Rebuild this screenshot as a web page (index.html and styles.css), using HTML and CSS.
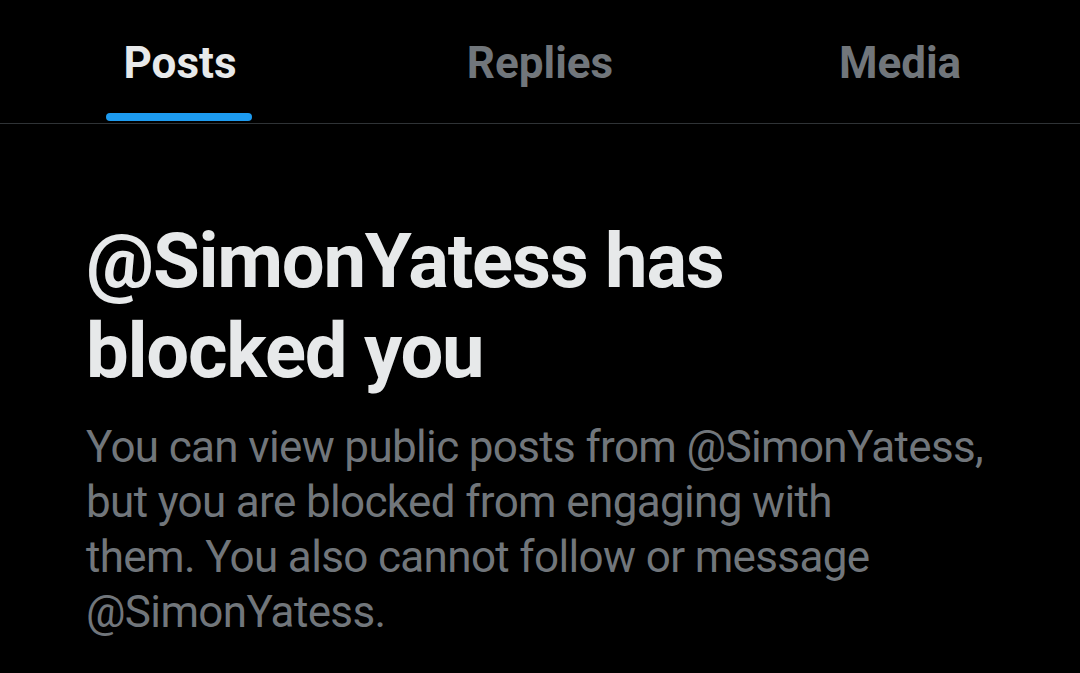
FILE: index.html
```html
<!DOCTYPE html>
<html lang="en">
<head>
<meta charset="utf-8">
<link rel="stylesheet" href="styles.css">
</head>
<body>
<nav class="tabs">
  <div class="tab tab-active"><span class="tab-label">Posts</span><span class="indicator"></span></div>
  <div class="tab"><span class="tab-label">Replies</span></div>
  <div class="tab"><span class="tab-label">Media</span></div>
</nav>
<main class="blocked">
  <h1 class="blocked-title">@SimonYatess has<br>blocked you</h1>
  <p class="blocked-text">You can view public posts from @SimonYatess,<br>but you are blocked from engaging with<br>them. You also cannot follow or message<br>@SimonYatess.</p>
</main>
</body>
</html>
```
FILE: styles.css
```css
html, body {
  margin: 0;
  padding: 0;
  background: #000;
}
body {
  width: 1080px;
  height: 673px;
  overflow: hidden;
  font-family: Roboto, "Noto Sans", sans-serif;
}
.tabs {
  display: grid;
  grid-template-columns: repeat(3, 1fr);
  height: 123px;
  border-bottom: 1px solid #2f3336;
}
.tab {
  position: relative;
  display: flex;
  justify-content: center;
  padding-top: 38px;
}
.tab-label {
  font-size: 44px;
  font-weight: 700;
  color: #71767b;
  line-height: 50px;
}
.tab-active .tab-label {
  color: #e7e9ea;
}
.indicator {
  position: absolute;
  left: 106px;
  width: 146px;
  bottom: 2px;
  height: 8px;
  border-radius: 4px;
  background: #1d9bf0;
}
.blocked {
  padding: 0 86px;
}
.blocked-title {
  margin: 92px 0 0;
  font-size: 76px;
  font-weight: 700;
  line-height: 90px;
  color: #e7e9ea;
  letter-spacing: -1.25px;
}
.blocked-text {
  margin: 24px 0 0;
  font-size: 44px;
  font-weight: 400;
  line-height: 55px;
  color: #71767b;
  letter-spacing: -0.65px;
}
```
